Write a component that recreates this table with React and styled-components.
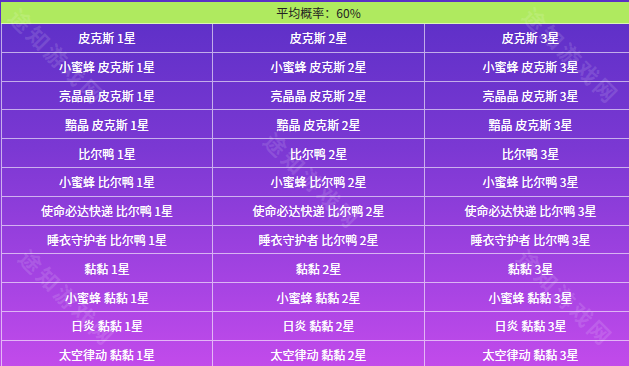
import styled, { createGlobalStyle } from "styled-components"

const GlobalStyle = createGlobalStyle`
  body {
    margin: 0;
    background: #ffffff;
    overflow: hidden;
  }
`

const pets = [
  ["皮克斯"],
  ["小蜜蜂 皮克斯"],
  ["亮晶晶 皮克斯"],
  ["黯晶 皮克斯"],
  ["比尔鸭"],
  ["小蜜蜂 比尔鸭"],
  ["使命必达快递 比尔鸭"],
  ["睡衣守护者 比尔鸭"],
  ["黏黏"],
  ["小蜜蜂 黏黏"],
  ["日炎 黏黏"],
  ["太空律动 黏黏"],
]

const marks = [
  { x: 58, y: 56 },
  { x: 572, y: 55 },
  { x: 313, y: 180 },
  { x: 68, y: 297 },
  { x: 566, y: 297 },
]

const App = () => {
  return (
    <>
      <GlobalStyle />
      <Board>
        <Header>平均概率：60%</Header>
        {pets.map(([name]) => (
          <Row key={name}>
            {[1, 2, 3].map((star) => (
              <Cell key={star}>
                {name} {star}星
              </Cell>
            ))}
          </Row>
        ))}
        {marks.map((m, i) => (
          <Mark key={i} style={{ left: m.x, top: m.y }}>
            途知游戏网
          </Mark>
        ))}
      </Board>
    </>
  )
}
export default App

const Board = styled.div`
  position: relative;
  width: 636px;
  height: 370px;
  padding: 2px 0 0 1px;
  box-sizing: border-box;
  background: linear-gradient(to bottom, #5a2fc6 0%, #7b38d3 40%, #a443e2 75%, #c34beb 100%);
  font-family: "Noto Sans CJK SC", "Noto Sans", sans-serif;
  font-size: 12px;
  overflow: hidden;
`

const Header = styled.div`
  height: 21px;
  display: flex;
  align-items: center;
  justify-content: center;
  background: #afea5f;
  color: #222222;
  border-bottom: 1px solid rgba(255, 255, 255, 0.55);
`

const Row = styled.div`
  display: grid;
  grid-template-columns: 211px 212px 212px;
  height: 28.8px;
  box-sizing: border-box;
  border-bottom: 1px solid rgba(255, 255, 255, 0.6);
`

const Cell = styled.div`
  display: flex;
  align-items: center;
  justify-content: center;
  color: #ffffff;
  text-shadow: 0 0 0.5px #ffffff;
  border-left: 1px solid rgba(255, 255, 255, 0.6);
  white-space: nowrap;
`

const Mark = styled.div`
  position: absolute;
  transform: translate(-50%, -50%) rotate(45deg);
  font-size: 22px;
  font-weight: bold;
  letter-spacing: 3px;
  color: rgba(255, 255, 255, 0.13);
  white-space: nowrap;
  pointer-events: none;
`
